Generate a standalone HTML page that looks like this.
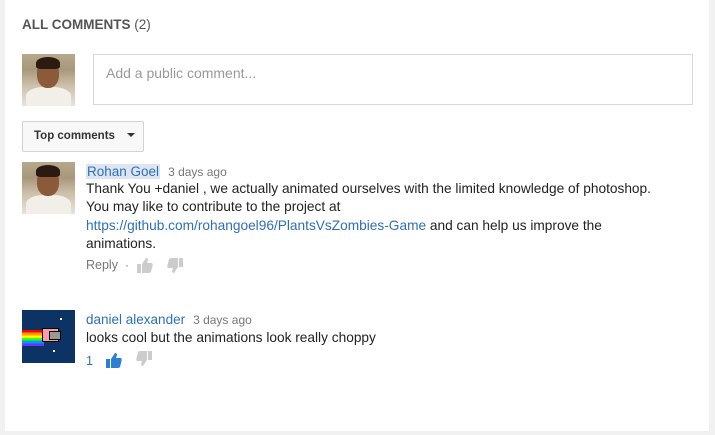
<!DOCTYPE html>
<html><head><meta charset="utf-8"><style>
*{margin:0;padding:0;box-sizing:border-box}
body{width:715px;height:435px;background:#f1f1f1;font-family:"Liberation Sans",Arial,sans-serif;position:relative;overflow:hidden}
.card{position:absolute;left:5px;top:0;width:704px;height:431px;background:#fff}
.a{position:absolute}
.h{left:22px;top:17px;font-size:13.5px;font-weight:bold;color:#555;letter-spacing:0}
.h span{font-weight:normal}
.av{width:53px;height:52px;background:linear-gradient(#b7a98b 0,#a8977b 30%,#cdbfa8 60%,#e8e3db 100%);overflow:hidden}
.av .f{position:absolute;left:15px;top:6px;width:22px;height:28px;border-radius:45%;background:#8a5a3a}
.av .hr{position:absolute;left:14px;top:3px;width:24px;height:12px;border-radius:50% 50% 20% 20%;background:#2a1a12}
.av .sh{position:absolute;left:4px;top:33px;width:45px;height:22px;border-radius:40% 40% 0 0;background:#f2efe9}
.box{left:93px;top:54px;width:600px;height:51px;border:1px solid #d8d8d8;font-size:14px;color:#999;padding:10px 12px}
.btn{left:22px;top:121px;width:122px;height:31px;border:1px solid #d3d3d3;background:#f8f8f8;border-radius:2px;font-size:11.5px;font-weight:bold;color:#333;padding:8px 0 0 11px}
.name{font-size:13.5px;color:#2e6fba}
.time{font-size:12px;color:#777;margin-left:8px}
.txt{font-size:13.7px;color:#222;line-height:18.3px}
.txt a{color:#2e6fba;text-decoration:none}
.sm{font-size:12.5px;color:#777}
</style></head><body>
<div class="card"></div>
<div class="a h">ALL COMMENTS <span>(2)</span></div>
<div class="a av" style="left:22px;top:54px"><div class="sh"></div><div class="f"></div><div class="hr"></div></div>
<div class="a box">Add a public comment...</div>
<div class="a btn">Top comments <span style="display:inline-block;width:0;height:0;border-left:4px solid transparent;border-right:4px solid transparent;border-top:4px solid #333;margin-left:9px;vertical-align:2px"></span></div>

<div class="a av" style="left:22px;top:162px"><div class="sh"></div><div class="f"></div><div class="hr"></div></div>
<div class="a" style="left:86px;top:163px"><span class="name" style="background:#dde6f0;padding:0 1px">Rohan Goel</span><span class="time">3 days ago</span></div>
<div class="a txt" style="left:86px;top:180px;width:620px">Thank You +daniel , we actually animated ourselves with the limited knowledge of photoshop.<br>You may like to contribute to the project at<br><a>https://github.com/rohangoel96/PlantsVsZombies-Game</a> and can help us improve the<br>animations.</div>
<div class="a sm" style="left:86px;top:258px">Reply</div>
<div class="a" style="left:125px;top:258px;color:#777;font-size:12px">·</div>
<svg class="a" style="left:136px;top:257px" width="18" height="17" viewBox="0 0 18 17"><rect x="1" y="7" width="4" height="9" fill="#ccc"/><path d="M6 7 L10 1 Q12 1 12 3 L11 6 L16 6 Q17 7 16.5 9 L15 15 Q14.5 16 13 16 L6 16Z" fill="#ccc"/></svg>
<svg class="a" style="left:166px;top:257px" width="18" height="17" viewBox="0 0 18 17"><rect x="13" y="1" width="4" height="9" fill="#ccc"/><path d="M12 10 L8 16 Q6 16 6 14 L7 11 L2 11 Q1 10 1.5 8 L3 2 Q3.5 1 5 1 L12 1Z" fill="#ccc"/></svg>

<div class="a" style="left:22px;top:310px;width:53px;height:53px;background:#0d3264;overflow:hidden">
<div class="a" style="left:0;top:20px;width:22px;height:16px;background:linear-gradient(#f00 0,#f00 17%,#f90 17%,#f90 33%,#ff0 33%,#ff0 50%,#3f0 50%,#3f0 67%,#09f 67%,#09f 83%,#63f 83%)"></div>
<div class="a" style="left:20px;top:18px;width:17px;height:14px;background:#f9a;border:1px solid #000"></div>
<div class="a" style="left:27px;top:21px;width:12px;height:9px;background:#999;border:1px solid #000"></div>
<div class="a" style="left:38px;top:8px;width:2px;height:2px;background:#fff"></div>
<div class="a" style="left:31px;top:40px;width:2px;height:2px;background:#fff"></div>
</div>
<div class="a" style="left:86px;top:311px"><span class="name">daniel alexander</span><span class="time">3 days ago</span></div>
<div class="a txt" style="left:86px;top:329px">looks cool but the animations look really choppy</div>
<div class="a" style="left:86px;top:354px;font-size:12.5px;color:#2e6fba">1</div>
<svg class="a" style="left:105px;top:352px" width="18" height="17" viewBox="0 0 18 17"><rect x="1" y="7" width="4" height="9" fill="#2a7fd4"/><path d="M6 7 L10 1 Q12 1 12 3 L11 6 L16 6 Q17 7 16.5 9 L15 15 Q14.5 16 13 16 L6 16Z" fill="#2a7fd4"/></svg>
<svg class="a" style="left:135px;top:350px" width="18" height="17" viewBox="0 0 18 17"><rect x="13" y="1" width="4" height="9" fill="#ccc"/><path d="M12 10 L8 16 Q6 16 6 14 L7 11 L2 11 Q1 10 1.5 8 L3 2 Q3.5 1 5 1 L12 1Z" fill="#ccc"/></svg>
</body></html>
